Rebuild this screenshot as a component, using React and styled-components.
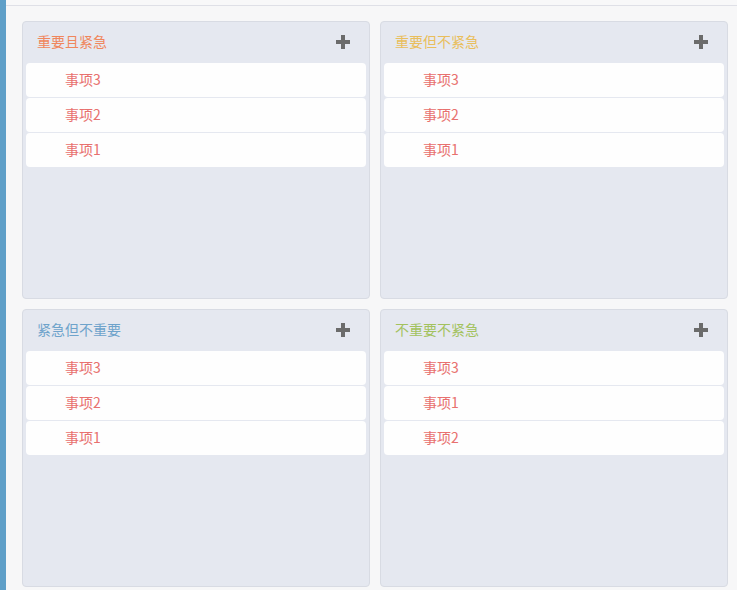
import React from "react";
import styled, { createGlobalStyle } from "styled-components";

const Global = createGlobalStyle`
  html, body { margin: 0; padding: 0; background: #f7f7f8; }
  body { font-family: "Noto Sans CJK SC", "Noto Sans", sans-serif; }
`;

const Page = styled.div`
  display: flex;
  height: 590px;
  overflow: hidden;
`;

const SideBar = styled.div`
  width: 6px;
  flex: none;
  background: #5f9fc8;
`;

const Main = styled.div`
  flex: 1;
  display: flex;
  flex-direction: column;
`;

const TopStrip = styled.div`
  height: 5px;
  border-bottom: 1px solid #dfe0e7;
  background: #f8f8f9;
`;

const Grid = styled.div`
  display: grid;
  grid-template-columns: 348px 348px;
  grid-template-rows: 278px 278px;
  gap: 10px;
  padding: 15px 0 0 16px;
`;

const Panel = styled.div`
  background: #e5e8f0;
  border: 1px solid #d8dbe3;
  border-radius: 4px;
  padding: 0 3px;
  box-sizing: border-box;
  display: flex;
  flex-direction: column;
`;

const Header = styled.div`
  height: 41px;
  box-sizing: border-box;
  display: flex;
  align-items: center;
  justify-content: space-between;
  padding: 0 16px 1px 11px;
`;

const Title = styled.span`
  font-size: 14px;
  line-height: 1;
  padding-bottom: 3px;
  color: ${(p) => p.$color};
`;

const AddButton = styled.button`
  border: none;
  background: none;
  padding: 0;
  width: 14px;
  height: 14px;
  display: flex;
  cursor: pointer;
`;

const List = styled.div`
  display: flex;
  flex-direction: column;
  gap: 1px;
`;

const Item = styled.div`
  height: 34px;
  box-sizing: border-box;
  background: #fefefe;
  border-radius: 4px;
  display: flex;
  align-items: center;
  padding: 0 0 2px 39px;
  font-size: 14px;
  line-height: 1;
  color: #e8706e;
`;

const PlusIcon = () => (
  <svg width="14" height="14" viewBox="0 0 14 14">
    <rect x="5" y="0" width="4" height="14" fill="#6b6b6b" />
    <rect x="0" y="5" width="14" height="4" fill="#6b6b6b" />
  </svg>
);

const quadrants = [
  { title: "重要且紧急", color: "#f0865c", items: ["事项3", "事项2", "事项1"] },
  { title: "重要但不紧急", color: "#e9be5c", items: ["事项3", "事项2", "事项1"] },
  { title: "紧急但不重要", color: "#6ea3cb", items: ["事项3", "事项2", "事项1"] },
  { title: "不重要不紧急", color: "#a3c25e", items: ["事项3", "事项1", "事项2"] },
];

export default function App() {
  return (
    <Page>
      <Global />
      <SideBar />
      <Main>
        <TopStrip />
        <Grid>
          {quadrants.map((q) => (
            <Panel key={q.title}>
              <Header>
                <Title $color={q.color}>{q.title}</Title>
                <AddButton aria-label="添加">
                  <PlusIcon />
                </AddButton>
              </Header>
              <List>
                {q.items.map((it, i) => (
                  <Item key={i}>{it}</Item>
                ))}
              </List>
            </Panel>
          ))}
        </Grid>
      </Main>
    </Page>
  );
}
